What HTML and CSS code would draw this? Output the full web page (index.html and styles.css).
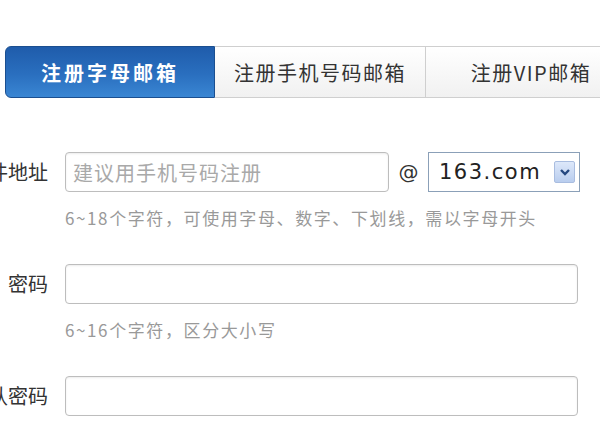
FILE: index.html
```html
<!DOCTYPE html>
<html lang="zh-CN">
<head>
  <meta charset="UTF-8" />
  <meta name="viewport" content="width=device-width,initial-scale=1" />
  <title>注册网易免费邮箱</title>
  <link rel="stylesheet" href="styles.css">
</head>
<body>
  <div id="reg">
    <div class="tabs">
      <div class="tab active">注册字母邮箱</div>
      <div class="tab">注册手机号码邮箱</div>
      <div class="tab">注册VIP邮箱</div>
    </div>

    <form class="reg-form" onsubmit="return false;">
      <div class="field">
        <label class="label" for="mail">邮件地址</label>
        <div class="control">
          <input id="mail" class="text" type="text" placeholder="建议用手机号码注册" />
          <span class="at">@</span>
          <div class="domain">
            <span>163.com</span>
            <span class="arrow">
              <svg width="12" height="12" viewBox="0 0 12 12"><path d="M2 4 6 8 10 4" fill="none" stroke="#24477f" stroke-width="2.4"/></svg>
            </span>
          </div>
        </div>
        <div class="hint">6~18个字符，可使用字母、数字、下划线，需以字母开头</div>
      </div>

      <div class="field">
        <label class="label" for="pwd">密码</label>
        <div class="control">
          <input id="pwd" class="text wide" type="password" />
        </div>
        <div class="hint">6~16个字符，区分大小写</div>
      </div>

      <div class="field">
        <label class="label" for="pwd2">确认密码</label>
        <div class="control">
          <input id="pwd2" class="text wide" type="password" />
        </div>
      </div>
    </form>
  </div>
</body>
</html>
```

FILE: styles.css
```css
* {margin:0;padding:0;box-sizing:border-box}
html,body {overflow:hidden;background:#fff}
body {
  width:600px;height:423px;
  font-family:"Noto Sans CJK SC", "Noto Sans", sans-serif;color:#333;
}
#reg {padding-top:46px}

.tabs {
  display:flex;margin-left:5px;width:650px;height:52px;
}
.tab {
  width:211px;flex-shrink:0;display:flex;align-items:center;justify-content:center;
  font-size:20px;letter-spacing:1.5px;color:#333;
  background:linear-gradient(180deg,#ffffff 0%,#f1f1f1 100%);
  border:1px solid #cfcfcf;border-left:none;
}
.tab.active {
  width:210px;color:#fff;font-weight:700;letter-spacing:3px;
  background:linear-gradient(180deg,#1f5cab 0%,#2a6fbf 55%,#3a86d3 100%);
  border:1px solid #1b4f90;border-radius:6px 0 0 6px;
}

.reg-form {margin-top:54px;margin-left:-72px}
.field {
  display:grid;grid-template-columns:120px 1fr;column-gap:17px;margin-bottom:36px;
}
.label {
  font-size:20px;text-align:right;line-height:40px;color:#333;white-space:nowrap;
}
.control {display:flex;align-items:center}
.text {
  width:324px;height:40px;border:1px solid #bdbdbd;border-radius:4px;
  padding:0 7px;font-size:20px;letter-spacing:1px;color:#333;outline:none;
  font-family:"Noto Sans CJK SC", sans-serif;
  box-shadow:inset 0 1px 2px rgba(0,0,0,.08);
}
.text::placeholder {color:#a9a9a9}
.text.wide {width:513px}
.at {width:39px;text-align:center;font-size:20px;font-family:"DejaVu Sans", sans-serif;color:#333}
.domain {
  width:152px;height:40px;border:1px solid #8ba0b8;display:flex;align-items:center;
  justify-content:space-between;padding:0 4px 0 10px;
  font-family:"DejaVu Sans", sans-serif;font-size:21px;letter-spacing:1.5px;color:#222;
}
.arrow {
  width:21px;height:22px;display:flex;align-items:center;justify-content:center;
  background:linear-gradient(180deg,#dde8fa 0%,#b9cdee 100%);border:1px solid #a9bde0;border-radius:2px;
}
.hint {
  grid-column:2;margin-top:16px;font-size:17px;line-height:20px;color:#999;letter-spacing:1.6px;
  white-space:nowrap;
}
```
